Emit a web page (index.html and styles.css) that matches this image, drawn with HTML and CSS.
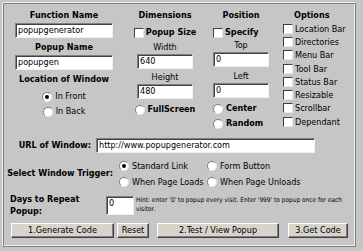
FILE: index.html
```html
<!DOCTYPE html>
<html>
<head>
<meta charset="utf-8">
<link rel="stylesheet" href="styles.css">
</head>
<body>
<div class="panel">
  <div class="top">
    <div class="col c1">
      <div class="lbl">Function Name</div>
      <div class="inp w98">popupgenerator</div>
      <div class="lbl m3">Popup Name</div>
      <div class="inp w98 m2">popupgen</div>
      <div class="lbl m3">Location of Window</div>
      <div class="opt m4"><span class="radio on"></span>In Front</div>
      <div class="opt m2"><span class="radio"></span>In Back</div>
    </div>
    <div class="col c2">
      <div class="lbl">Dimensions</div>
      <div class="opt b m4"><span class="check"></span>Popup Size</div>
      <div class="plain m2">Width</div>
      <div class="inp w56">640</div>
      <div class="plain m2">Height</div>
      <div class="inp w56">480</div>
      <div class="opt b m4"><span class="radio"></span>FullScreen</div>
    </div>
    <div class="col c3">
      <div class="lbl">Position</div>
      <div class="opt b m4 left"><span class="check"></span>Specify</div>
      <div class="plain">Top</div>
      <div class="inp w56">0</div>
      <div class="plain m3">Left</div>
      <div class="inp w56">0</div>
      <div class="opt b m4 left"><span class="radio"></span>Center</div>
      <div class="opt b m2 left"><span class="radio"></span>Random</div>
    </div>
    <div class="col c4">
      <div class="lbl opts">Options</div>
      <div class="orow"><span class="check"></span>Location Bar</div>
      <div class="orow"><span class="check"></span>Directories</div>
      <div class="orow"><span class="check"></span>Menu Bar</div>
      <div class="orow"><span class="check"></span>Tool Bar</div>
      <div class="orow"><span class="check"></span>Status Bar</div>
      <div class="orow"><span class="check"></span>Resizable</div>
      <div class="orow"><span class="check"></span>Scrollbar</div>
      <div class="orow"><span class="check"></span>Dependant</div>
    </div>
  </div>
  <div class="urlrow">
    <div class="lbl rl">URL of Window:</div>
    <div class="inp wurl">http://www.popupgenerator.com</div>
  </div>
  <div class="trigrow">
    <div class="lbl tl">Select Window Trigger:</div>
    <div class="trig">
      <div class="topt"><span class="radio on"></span>Standard Link</div>
      <div class="topt"><span class="radio"></span>Form Button</div>
      <div class="topt"><span class="radio"></span>When Page Loads</div>
      <div class="topt"><span class="radio"></span>When Page Unloads</div>
    </div>
  </div>
  <div class="daysrow">
    <div class="lbl dl">Days to Repeat<br>Popup:</div>
    <div class="inp wdays">0</div>
    <div class="hint">Hint: enter '0' to popup every visit. Enter '999' to popup once for each visitor.</div>
  </div>
  <div class="btns">
    <div class="btn b1">1.Generate Code</div>
    <div class="btn b2">Reset</div>
    <div class="btn b3">2.Test / View Popup</div>
    <div class="btn b4">3.Get Code</div>
  </div>
</div>
</body>
</html>
```

FILE: styles.css
```css
html, body {
  margin: 0;
  padding: 0;
  background: #c6c6c6;
}
body {
  width: 363px;
  height: 251px;
  overflow: hidden;
  font-family: "DejaVu Sans Condensed", "DejaVu Sans", sans-serif;
  font-size: 9px;
  color: #000;
}
.panel {
  margin: 2px 0 0 2px;
  width: 352px;
  height: 243px;
  border: 1px solid;
  border-color: #f0f0f0 #808080 #808080 #f0f0f0;
  box-shadow: inset 1px 1px 0 #808080, inset -1px -1px 0 #f0f0f0;
}
.top {
  display: flex;
  padding-top: 6px;
}
.col {
  display: flex;
  flex-direction: column;
  align-items: center;
}
.c1 { margin-left: 5px; width: 112px; }
.c2 { margin-left: 13px; width: 64px; }
.c3 { margin-left: 13px; width: 62px; }
.c4 { margin-left: 11px; width: 70px; align-items: flex-start; }
.lbl {
  font-weight: bold;
  line-height: 13px;
  height: 13px;
  white-space: nowrap;
}
.plain {
  line-height: 13px;
  height: 13px;
}
.m2 { margin-top: 2px; }
.m3 { margin-top: 3px; }
.m4 { margin-top: 4px; }
.inp {
  box-sizing: border-box;
  height: 15px;
  background: #fff;
  border: 1px solid;
  border-color: #808080 #f0f0f0 #f0f0f0 #808080;
  box-shadow: inset 1px 1px 0 #404040;
  padding: 1px 0 0 2px;
  line-height: 11px;
  white-space: nowrap;
  overflow: hidden;
}
.c1 .inp { margin-top: 1px; }
.w98 { width: 98px; }
.w56 { width: 56px; }
.opt {
  display: flex;
  align-items: center;
  line-height: 13px;
  height: 13px;
  white-space: nowrap;
}
.opt.b { font-weight: bold; }
.left { align-self: flex-start; margin-left: 3px; }
.radio {
  box-sizing: border-box;
  width: 10px;
  height: 10px;
  border-radius: 50%;
  background: #fff;
  border: 1px solid;
  border-color: #808080 #e8e8e8 #e8e8e8 #808080;
  margin-right: 3px;
  position: relative;
  flex: none;
}
.radio.on::after {
  content: "";
  position: absolute;
  left: 2px;
  top: 2px;
  width: 4px;
  height: 4px;
  border-radius: 50%;
  background: #000;
}
.check {
  box-sizing: border-box;
  width: 10px;
  height: 10px;
  background: #fff;
  border: 1px solid;
  border-color: #404040 #e8e8e8 #e8e8e8 #404040;
  margin-right: 2px;
  flex: none;
}
.opts { align-self: flex-start; margin-left: 11px; }
.orow {
  display: flex;
  align-items: center;
  height: 13.3px;
  white-space: nowrap;
}
.urlrow {
  display: flex;
  align-items: center;
  margin-top: 8px;
}
.rl { width: 88px; text-align: right; }
.wurl { width: 219px; margin-left: 5px; }
.trigrow {
  display: flex;
  align-items: center;
  margin-top: 6px;
}
.tl { width: 110px; text-align: right; }
.trig {
  display: grid;
  grid-template-columns: 88px 100px;
  row-gap: 3px;
  margin-left: 6px;
}
.topt {
  display: flex;
  align-items: center;
  height: 13px;
  white-space: nowrap;
}
.daysrow {
  display: flex;
  align-items: center;
  margin-top: 5px;
}
.dl {
  height: auto;
  width: 96px;
  padding-left: 7px;
  box-sizing: border-box;
  line-height: 12px;
}
.wdays { width: 28px; height: 19px; margin-left: 7px; }
.hint {
  font-size: 6.5px;
  line-height: 9px;
  margin-left: 2px;
  width: 215px;
}
.btns {
  display: flex;
  margin-top: 6px;
  margin-left: 8px;
}
.btn {
  box-sizing: border-box;
  height: 15px;
  background: #d8d4cc;
  border: 1px solid;
  border-color: #fff #404040 #404040 #fff;
  box-shadow: inset -1px -1px 0 #808080;
  text-align: center;
  line-height: 13px;
  font-size: 9px;
}
.b1 { width: 103px; }
.b2 { width: 32px; margin-left: 3px; }
.b3 { width: 122px; margin-left: 8px; }
.b4 { width: 60px; margin-left: 9px; }
```
